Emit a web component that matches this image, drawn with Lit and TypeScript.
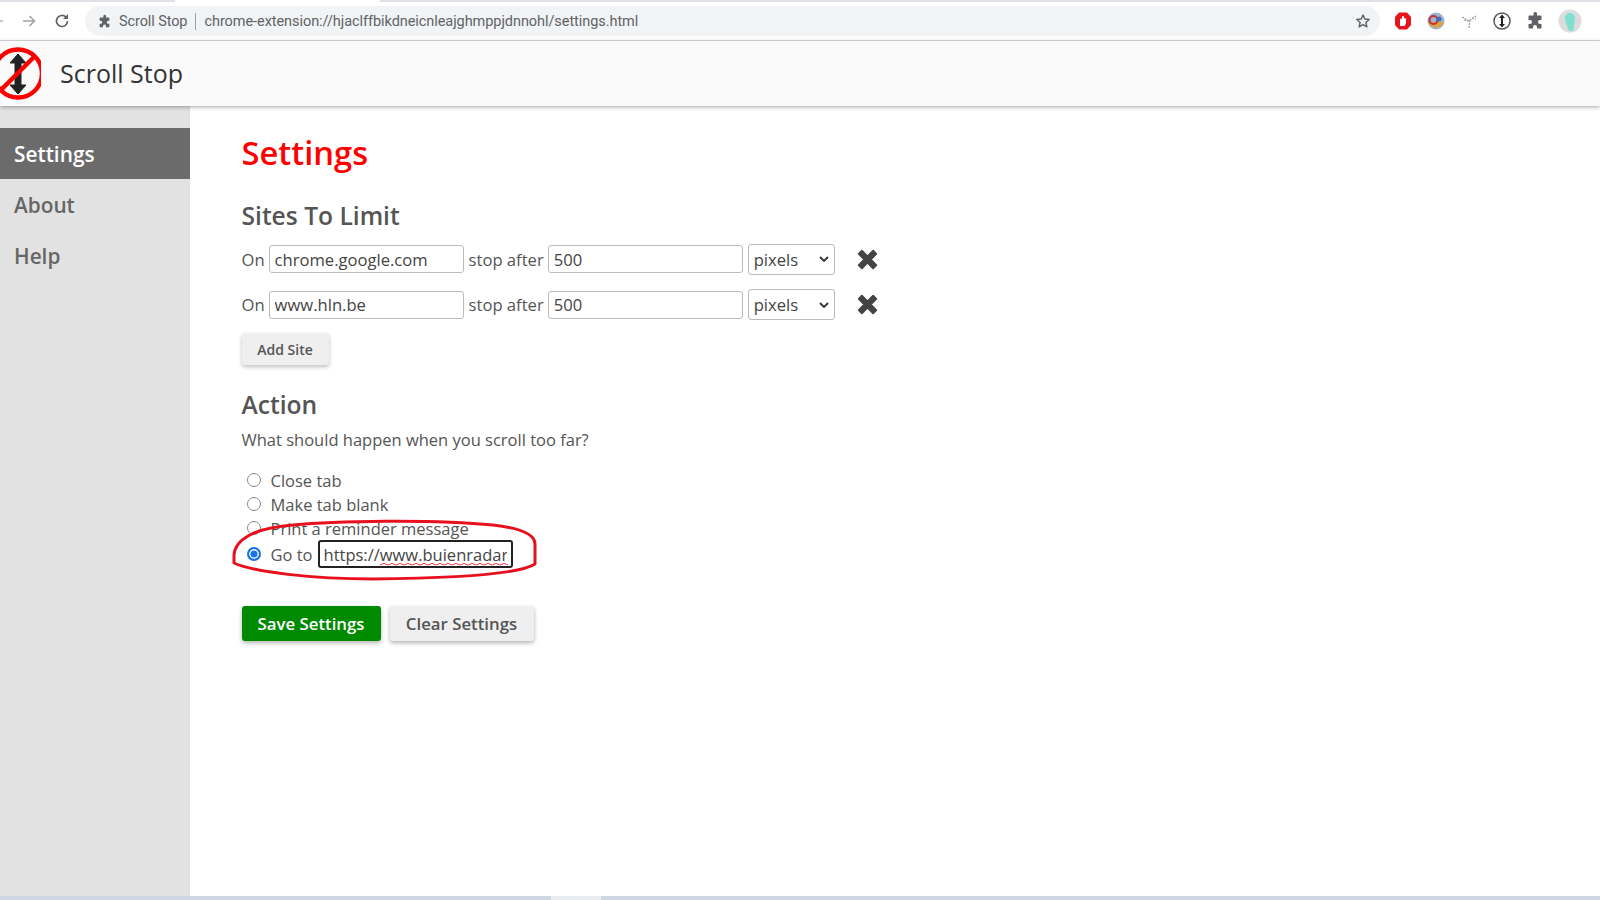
import { LitElement, html, css, svg } from "lit";
import { customElement } from "lit/decorators.js";

const siteRows = ["chrome.google.com", "www.hln.be"];
const squiggle = "M0 2" + Array.from({ length: 32 }, (_, i) => `L${(i + 1) * 4} ${i % 2 ? 2 : 0.4}`).join("");

@customElement("app-root")
export class AppRoot extends LitElement {
  static styles = css`
    :host { display: flex; flex-direction: column; width: 1600px; height: 900px; overflow: hidden; position: relative; background: #fff; font-family: "Open Sans", sans-serif; color: #555; }
    * { box-sizing: border-box; }
    .tabstrip { height: 2px; flex: none; background: linear-gradient(90deg, #dee1e6 0 175px, #fff 175px 380px, #dee1e6 380px); }
    .toolbar { height: 39px; flex: none; background: #fff; display: flex; align-items: center; border-bottom: 1px solid #dadce0; }
    .nav { width: 96px; flex: none; display: flex; align-items: center; gap: 16px; margin-left: -11px; color: #5f6368; }
    .nav svg { display: block; flex: none; }
    .omni { width: 1295px; flex: none; height: 30px; border-radius: 15px; background: #f1f3f4; display: flex; align-items: center; padding-left: 12px; font-size: 14.5px; color: #5f6368; font-family: "Roboto", sans-serif; }
    .omni .site { margin-left: 7px; letter-spacing: -0.1px; }
    .omni .sep { width: 1px; height: 17px; background: #9aa0a6; margin: 0 8px; }
    .omni .url { flex: 1; letter-spacing: -0.06px; }
    .omni .star { margin-right: 9px; }
    .exts { display: flex; align-items: center; gap: 13px; margin-left: 13px; }
    .exts svg { display: block; }
    .header { height: 65px; flex: none; background: #fafafa; display: flex; align-items: center; box-shadow: 0 1px 4px rgba(0,0,0,.35); position: relative; z-index: 1; }
    .logo { margin-left: -7px; flex: none; display: block; }
    .brand { margin: 0 0 2px 19px; font-size: 25px; color: #333; }
    .body { flex: 1; display: flex; min-height: 0; }
    .side { width: 190px; flex: none; background: #e2e2e2; padding-top: 22px; }
    .side a { display: flex; align-items: center; height: 51px; padding-left: 14px; font-size: 20.8px; font-weight: 600; color: #666; }
    .side a.on { background: #6b6b6b; color: #fff; }
    .main { flex: 1; padding: 22px 0 0 51.5px; }
    h1 { margin: 0; font-size: 32.7px; line-height: 50px; font-weight: 600; color: #f00; }
    h2 { margin: 0; font-size: 24.6px; line-height: 36px; font-weight: 600; color: #555; }
    .sites { margin-top: 20px; }
    h2.action { margin-top: 22px; }
    .rows { display: flex; flex-direction: column; gap: 15.5px; margin: 10px 0 13.5px; }
    .row { display: flex; align-items: center; height: 30px; font-size: 16.6px; }
    .row input { font: inherit; color: #444; height: 28px; width: 195px; border: 1px solid #bbb; border-radius: 3px; padding: 0 5px; margin: 0 5px 0 4px; background: #fff; outline: none; }
    .sel { width: 87px; height: 31px; border: 1px solid #bbb; border-radius: 3px; display: flex; align-items: center; justify-content: space-between; padding: 0 5px; color: #444; background: #fff; }
    .del { margin-left: 20px; display: block; flex: none; }
    button { font-family: inherit; border: none; border-radius: 3px; cursor: pointer; }
    .add { display: block; width: 87px; height: 32px; font-size: 14px; font-weight: 600; background: #efefef; color: #555; box-shadow: 0 2px 4px rgba(0,0,0,.25); }
    .q { font-size: 16.5px; line-height: 24px; margin: 5px 0 16px; }
    .opt { display: flex; align-items: center; height: 24px; font-size: 16.5px; }
    .radio { width: 14px; height: 14px; border: 1.5px solid #8a8a8a; border-radius: 50%; margin: 0 10px 0 5px; flex: none; background: #fff; }
    .radio.on { border: 2px solid #1a73e8; background: #1a73e8; box-shadow: inset 0 0 0 1.5px #fff; }
    .opt.go { height: 26px; margin-top: 1px; }
    .go input { font: inherit; color: #444; width: 195px; height: 28px; border: 2px solid #222; border-radius: 3px; padding: 0 4px; margin-left: 5px; outline: none; background: #fff; }
    .btns { display: flex; gap: 9px; margin-top: 39px; }
    .btns button { height: 35px; font-size: 16.8px; font-weight: 600; box-shadow: 0 2px 4px rgba(0,0,0,.3); }
    .save { width: 139px; background: #008a00; color: #fff; }
    .clear { width: 144px; background: #efefef; color: #555; }
    .mark { position: absolute; left: 233px; top: 520px; display: block; pointer-events: none; overflow: visible; }
    .squiggle { position: absolute; left: 380px; top: 563px; display: block; pointer-events: none; }
    .scroll { height: 4px; flex: none; background: linear-gradient(90deg, #cdd6e2 0 551px, #e8edf1 551px 601px, #cdd6e2 601px); }
  `;

  private row(site: string) {
    return html`<div class="row">
      <span>On</span><input .value=${site} />
      <span>stop after</span><input value="500" />
      <div class="sel"><span>pixels</span>
        <svg width="10" height="6" viewBox="0 0 10 6"><path d="M1 1l4 4 4-4" fill="none" stroke="#333" stroke-width="1.8"/></svg>
      </div>
      <svg class="del" width="25" height="25" viewBox="0 0 20 20"><path d="M3 5.500 5.500 3 10 7.500 14.500 3 17 5.500 12.500 10 17 14.500 14.500 17 10 12.500 5.500 17 3 14.500 7.500 10Z" fill="#444" stroke="#444" stroke-width="1.500" stroke-linejoin="round"/></svg>
    </div>`;
  }

  render() {
    const puzzle = svg`<path d="M8.500 2.500a1.800 1.800 0 0 1 3.500 0V4.500h3.500a1 1 0 0 1 1 1V9h-1.500a2 2 0 0 0 0 4h1.500v3.500a1 1 0 0 1-1 1H12V16a2 2 0 0 0-4 0v1.500H4.500a1 1 0 0 1-1-1V13H5a2 2 0 0 0 0-4H3.500V5.500a1 1 0 0 1 1-1H8.500Z" fill="currentColor"/>`;
    return html`
      <div class="tabstrip"></div>
      <div class="toolbar">
        <div class="nav">
          <svg width="16" height="16" viewBox="0 0 16 16"><path d="M14 8H3M7.500 3 2.500 8l5 5" fill="none" stroke="#b5b7ba" stroke-width="1.600"/></svg>
          <svg width="16" height="16" viewBox="0 0 16 16"><path d="M2 8h11M8.500 3l5 5-5 5" fill="none" stroke="#a0a3a7" stroke-width="1.600"/></svg>
          <svg width="18" height="18" viewBox="0 0 18 18"><path d="M14.500 9a5.500 5.500 0 1 1-1.600-3.900" fill="none" stroke="#5f6368" stroke-width="1.700"/><path d="M15 2v5h-5z" fill="#5f6368"/></svg>
        </div>
        <div class="omni">
          <svg width="15" height="15" viewBox="0 0 20 20" style="color:#5f6368">${puzzle}</svg>
          <span class="site">Scroll Stop</span><span class="sep"></span>
          <span class="url">chrome-extension://hjaclffbikdneicnleajghmppjdnnohl/settings.html</span>
          <svg class="star" width="16" height="16" viewBox="0 0 24 24"><path d="M12 3l2.700 6.100 6.600.7-5 4.400 1.500 6.500L12 17.300l-5.800 3.400 1.500-6.500-5-4.400 6.600-.7z" fill="none" stroke="#5f6368" stroke-width="2.200" stroke-linejoin="round"/></svg>
        </div>
        <div class="exts">
          <svg width="20" height="20" viewBox="0 0 20 20"><path d="M6 1.500h8L18 6v8l-4 4.500H6L2 14V6z" fill="#e8141c"/><path d="M7 15V8.500a1 1 0 0 1 2 0V6a1 1 0 0 1 2 0v2a1 1 0 0 1 2 0v4.500l-1.500 2.500z" fill="#fff"/></svg>
          <svg width="20" height="20" viewBox="0 0 20 20"><circle cx="10" cy="10" r="8.500" fill="#9cb4d4"/><path d="M2 11h16a8.500 8.500 0 0 1-16 0z" fill="#d9a441"/><circle cx="7.500" cy="9" r="4" fill="none" stroke="#c9302c" stroke-width="2"/><circle cx="13" cy="8" r="2.500" fill="#3f6fb0"/></svg>
          <svg width="20" height="20" viewBox="0 0 20 20"><path d="M10 17 11 8M3 6l7 4 7-5M5 9l5 1M13 7l4 1" fill="none" stroke="#999" stroke-width="1.200" stroke-dasharray="2 1"/></svg>
          <svg width="20" height="20" viewBox="0 0 20 20"><circle cx="10" cy="10" r="8" fill="#fff" stroke="#555" stroke-width="1.500"/><path d="M10 3.500 13 7H11v6h2l-3 3.500L7 13h2V7H7z" fill="#222"/></svg>
          <svg width="20" height="20" viewBox="0 0 20 20" style="color:#5f6368">${puzzle}</svg>
          <svg width="24" height="24" viewBox="0 0 24 24"><circle cx="12" cy="12" r="11.500" fill="#dcdcdc"/><path d="M7 9a5 5 0 0 1 10 0c0 5-2 8-1 12-3 2-5 1-6-1 0-2-3-7-3-11z" fill="#7fe0cf"/></svg>
        </div>
      </div>
      <div class="header">
        <svg class="logo" width="48" height="56" viewBox="0 0 48 56">
          <path d="M25 8 33 17H28V39H33L25 48 17 39H22V17H17Z" fill="#222" stroke="#222" stroke-width="1" stroke-linejoin="round"/>
          <ellipse cx="25" cy="27.500" rx="24" ry="24" fill="none" stroke="#f00" stroke-width="4.500"/>
          <path d="M42 10 8 44" stroke="#f00" stroke-width="4.500"/>
        </svg>
        <span class="brand">Scroll Stop</span>
      </div>
      <div class="body">
        <nav class="side"><a class="on">Settings</a><a>About</a><a>Help</a></nav>
        <main class="main">
          <h1>Settings</h1>
          <h2 class="sites">Sites To Limit</h2>
          <div class="rows">${siteRows.map((s) => this.row(s))}</div>
          <button class="add">Add Site</button>
          <h2 class="action">Action</h2>
          <div class="q">What should happen when you scroll too far?</div>
          <div class="opt"><span class="radio"></span>Close tab</div>
          <div class="opt"><span class="radio"></span>Make tab blank</div>
          <div class="opt"><span class="radio"></span>Print a reminder message</div>
          <div class="opt go"><span class="radio on"></span>Go to<input value="https://www.buienradar" spellcheck="false" /></div>
          <div class="btns"><button class="save">Save Settings</button><button class="clear">Clear Settings</button></div>
        </main>
      </div>
      <div class="scroll"></div>
      <svg class="squiggle" width="128" height="3" viewBox="0 0 128 3"><path d=${squiggle} fill="none" stroke="#e8404a" stroke-width="1"/></svg>
      <svg class="mark" width="304" height="60" viewBox="0 0 304 60"><path d="M1 35C2 20 20 8 60 5 100 1 200-1 260 5 285 8 302 14 302 24V44C290 52 240 58 140 59 80 59 20 52 1 43Z" fill="none" stroke="#e8101e" stroke-width="3" stroke-linejoin="round"/></svg>
    `;
  }
}
